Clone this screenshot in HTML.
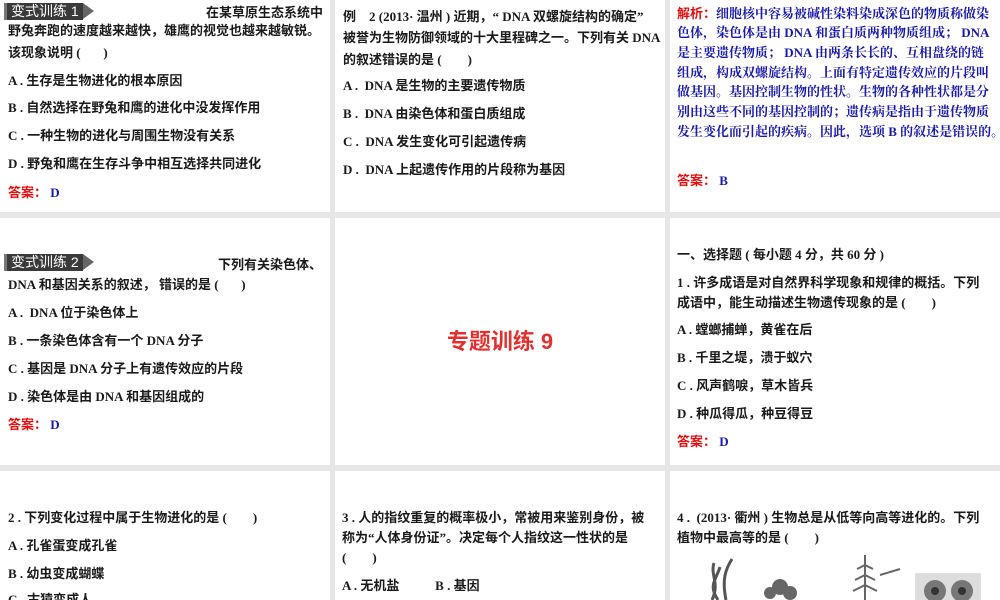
<!DOCTYPE html>
<html><head><meta charset="utf-8"><style>
html,body{margin:0;width:1000px;height:600px;overflow:hidden}
body{background:#e6e6e6;position:relative;font-family:"Liberation Serif","Noto Sans CJK SC",sans-serif;font-weight:bold;font-size:13px;color:#1a1a1a}
.p{position:absolute;background:#fff}
.l{position:absolute;white-space:nowrap;line-height:16px}
.r{color:#e01010;font-family:"Liberation Sans","Noto Sans CJK SC",sans-serif}
.b{color:#1a1aa8}
.k{font-family:"Liberation Serif","Noto Serif CJK SC",serif;font-weight:bold;color:#1a1aa8}
.tag{position:absolute;background:#3a3a3a;color:#fff;font-family:"Liberation Sans","Noto Sans CJK SC",sans-serif;font-weight:normal;font-size:14px;line-height:17px;padding:0 4px;border-left:3px solid #777}
.tag:after{content:"";position:absolute;right:-11px;top:0;border-left:11px solid #666;border-top:8.5px solid transparent;border-bottom:8.5px solid transparent}
</style></head><body>
<div class="p" style="left:0;top:0;width:330px;height:212px"></div>
<div class="p" style="left:335px;top:0;width:330px;height:212px"></div>
<div class="p" style="left:670px;top:0;width:330px;height:212px"></div>
<div class="p" style="left:0;top:218px;width:330px;height:247px"></div>
<div class="p" style="left:335px;top:218px;width:330px;height:247px"></div>
<div class="p" style="left:670px;top:218px;width:330px;height:247px"></div>
<div class="p" style="left:0;top:471px;width:330px;height:129px"></div>
<div class="p" style="left:335px;top:471px;width:330px;height:129px"></div>
<div class="p" style="left:670px;top:471px;width:330px;height:129px"></div>

<div class="tag" style="left:4px;top:3px">变式训练 1</div>
<div class="l" style="left:206px;top:5px">在某草原生态系统中</div>
<div class="l" style="left:8px;top:23px">野兔奔跑的速度越来越快，雄鹰的视觉也越来越敏锐。</div>
<div class="l" style="left:8px;top:45px">该现象说明 (&nbsp;&nbsp;&nbsp;&nbsp;&nbsp;&nbsp;&nbsp;)</div>
<div class="l" style="left:8px;top:73px">A . 生存是生物进化的根本原因</div>
<div class="l" style="left:8px;top:100px">B . 自然选择在野兔和鹰的进化中没发挥作用</div>
<div class="l" style="left:8px;top:128px">C . 一种生物的进化与周围生物没有关系</div>
<div class="l" style="left:8px;top:156px">D . 野兔和鹰在生存斗争中相互选择共同进化</div>
<div class="l" style="left:8px;top:185px"><span class="r">答案：</span> <span class="b">D</span></div>

<div class="l" style="left:343px;top:9px">例&nbsp;&nbsp;&nbsp;&nbsp;2 (2013· 温州 ) 近期，“ DNA 双螺旋结构的确定”</div>
<div class="l" style="left:343px;top:30px">被誉为生物防御领域的十大里程碑之一。下列有关 DNA</div>
<div class="l" style="left:343px;top:52px">的叙述错误的是 (&nbsp;&nbsp;&nbsp;&nbsp;&nbsp;&nbsp;&nbsp;&nbsp;)</div>
<div class="l" style="left:343px;top:78px">A .&nbsp; DNA 是生物的主要遗传物质</div>
<div class="l" style="left:343px;top:106px">B .&nbsp; DNA 由染色体和蛋白质组成</div>
<div class="l" style="left:343px;top:134px">C .&nbsp; DNA 发生变化可引起遗传病</div>
<div class="l" style="left:343px;top:162px">D .&nbsp; DNA 上起遗传作用的片段称为基因</div>

<div class="l k" style="left:677px;top:6px"><span class="r">解析：</span>细胞核中容易被碱性染料染成深色的物质称做染</div>
<div class="l k" style="left:677px;top:25px">色体，染色体是由 DNA 和蛋白质两种物质组成； DNA</div>
<div class="l k" style="left:677px;top:45px">是主要遗传物质； DNA 由两条长长的、互相盘绕的链</div>
<div class="l k" style="left:677px;top:65px">组成，构成双螺旋结构。上面有特定遗传效应的片段叫</div>
<div class="l k" style="left:677px;top:84px">做基因。基因控制生物的性状。生物的各种性状都是分</div>
<div class="l k" style="left:677px;top:104px">别由这些不同的基因控制的；遗传病是指由于遗传物质</div>
<div class="l k" style="left:677px;top:124px">发生变化而引起的疾病。因此，选项 B 的叙述是错误的。</div>
<div class="l" style="left:677px;top:173px"><span class="r">答案：</span> <span class="b">B</span></div>

<div class="tag" style="left:4px;top:254px">变式训练 2</div>
<div class="l" style="left:218px;top:257px">下列有关染色体、</div>
<div class="l" style="left:8px;top:277px">DNA 和基因关系的叙述， 错误的是 (&nbsp;&nbsp;&nbsp;&nbsp;&nbsp;&nbsp;&nbsp;)</div>
<div class="l" style="left:8px;top:305px">A .&nbsp; DNA 位于染色体上</div>
<div class="l" style="left:8px;top:333px">B . 一条染色体含有一个 DNA 分子</div>
<div class="l" style="left:8px;top:361px">C . 基因是 DNA 分子上有遗传效应的片段</div>
<div class="l" style="left:8px;top:389px">D . 染色体是由 DNA 和基因组成的</div>
<div class="l" style="left:8px;top:417px"><span class="r">答案：</span> <span class="b">D</span></div>

<div class="l r" style="left:0;width:1000px;text-align:center;top:329px;font-size:22px;line-height:26px;font-weight:bold;color:#e03030">专题训练 9</div>

<div class="l" style="left:677px;top:247px">一、选择题 ( 每小题 4 分，共 60 分 )</div>
<div class="l" style="left:677px;top:275px">1 . 许多成语是对自然界科学现象和规律的概括。下列</div>
<div class="l" style="left:677px;top:295px">成语中，能生动描述生物遗传现象的是 (&nbsp;&nbsp;&nbsp;&nbsp;&nbsp;&nbsp;&nbsp;&nbsp;)</div>
<div class="l" style="left:677px;top:322px">A . 螳螂捕蝉，黄雀在后</div>
<div class="l" style="left:677px;top:350px">B . 千里之堤，溃于蚁穴</div>
<div class="l" style="left:677px;top:378px">C . 风声鹤唳，草木皆兵</div>
<div class="l" style="left:677px;top:406px">D . 种瓜得瓜，种豆得豆</div>
<div class="l" style="left:677px;top:434px"><span class="r">答案：</span> <span class="b">D</span></div>

<div class="l" style="left:8px;top:510px">2 . 下列变化过程中属于生物进化的是 (&nbsp;&nbsp;&nbsp;&nbsp;&nbsp;&nbsp;&nbsp;&nbsp;)</div>
<div class="l" style="left:8px;top:538px">A . 孔雀蛋变成孔雀</div>
<div class="l" style="left:8px;top:566px">B . 幼虫变成蝴蝶</div>
<div class="l" style="left:8px;top:592px">C . 古猿变成人</div>

<div class="l" style="left:342px;top:510px">3 . 人的指纹重复的概率极小，常被用来鉴别身份，被</div>
<div class="l" style="left:342px;top:530px">称为“人体身份证”。决定每个人指纹这一性状的是</div>
<div class="l" style="left:342px;top:550px">(&nbsp;&nbsp;&nbsp;&nbsp;&nbsp;&nbsp;&nbsp;&nbsp;)</div>
<div class="l" style="left:342px;top:578px">A . 无机盐&nbsp;&nbsp;&nbsp;&nbsp;&nbsp;&nbsp;&nbsp;&nbsp;&nbsp;&nbsp; B . 基因</div>

<div class="l" style="left:677px;top:510px">4 .&nbsp; (2013· 衢州 ) 生物总是从低等向高等进化的。下列</div>
<div class="l" style="left:677px;top:530px">植物中最高等的是 (&nbsp;&nbsp;&nbsp;&nbsp;&nbsp;&nbsp;&nbsp;&nbsp;)</div>
<svg style="position:absolute;left:670px;top:555px" width="330" height="45">
<path d="M44 8 C40 20 50 28 42 45 M50 12 C46 25 38 30 48 45 M62 4 C55 15 52 25 56 45" stroke="#555" stroke-width="3" fill="none"/>
<g fill="#666"><circle cx="110" cy="32" r="8"/><circle cx="100" cy="38" r="6"/><circle cx="120" cy="38" r="7"/></g>
<path d="M195 0 L195 45 M195 10 l-8 4 M195 10 l8 4 M195 20 l-10 5 M195 20 l10 5 M195 30 l-12 6 M195 30 l12 6 M210 20 l20 -6" stroke="#666" stroke-width="2"/>
<rect x="245" y="18" width="66" height="27" fill="#ddd"/>
<circle cx="265" cy="36" r="11" fill="#777"/><circle cx="292" cy="36" r="11" fill="#777"/>
<circle cx="265" cy="36" r="4" fill="#333"/><circle cx="292" cy="36" r="4" fill="#333"/>
</svg>
</body></html>
